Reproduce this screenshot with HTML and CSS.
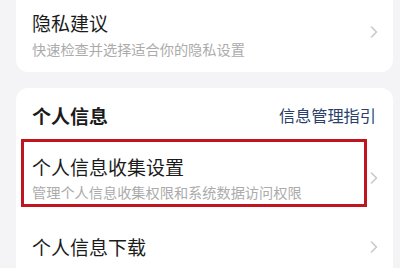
FILE: index.html
```html
<!DOCTYPE html>
<html lang="zh-CN">
<head>
<meta charset="utf-8">
<link rel="stylesheet" href="styles.css">
</head>
<body>
<div class="page">
  <div class="card card-top">
    <div class="row row-first">
      <div class="texts">
        <div class="title">隐私建议</div>
        <div class="sub">快速检查并选择适合你的隐私设置</div>
      </div>
      <svg class="chev" viewBox="0 0 8 12" width="8" height="12"><path d="M1.5 1 L6.5 6 L1.5 11" fill="none" stroke="#c9c9c9" stroke-width="1.6" stroke-linecap="round" stroke-linejoin="round"/></svg>
    </div>
  </div>
  <div class="card card-info">
    <div class="head">
      <div class="head-title">个人信息</div>
      <div class="head-link">信息管理指引</div>
    </div>
    <div class="row row-collect">
      <div class="texts">
        <div class="title">个人信息收集设置</div>
        <div class="sub">管理个人信息收集权限和系统数据访问权限</div>
      </div>
      <svg class="chev" viewBox="0 0 8 12" width="8" height="12"><path d="M1.5 1 L6.5 6 L1.5 11" fill="none" stroke="#c9c9c9" stroke-width="1.6" stroke-linecap="round" stroke-linejoin="round"/></svg>
    </div>
    <div class="row row-download">
      <div class="texts">
        <div class="title">个人信息下载</div>
      </div>
      <svg class="chev" viewBox="0 0 8 12" width="8" height="12"><path d="M1.5 1 L6.5 6 L1.5 11" fill="none" stroke="#c9c9c9" stroke-width="1.6" stroke-linecap="round" stroke-linejoin="round"/></svg>
    </div>
    <div class="highlight"></div>
  </div>
</div>
</body>
</html>
```
FILE: styles.css
```css
html, body {
  margin: 0;
  padding: 0;
  background: #f4f4f6;
  width: 400px;
  height: 268px;
  overflow: hidden;
  font-family: "Noto Sans CJK SC", "Noto Sans", sans-serif;
}
.page {
  padding: 0 7px 0 16px;
  display: flex;
  flex-direction: column;
  gap: 16px;
}
.card {
  background: #ffffff;
  position: relative;
}
.card-top {
  border-radius: 0 0 12px 12px;
  height: 72px;
  box-sizing: border-box;
}
.card-info {
  border-radius: 12px 12px 0 0;
  height: 180px;
}
.row {
  display: flex;
  align-items: center;
  padding: 0 15px 0 16px;
}
.texts {
  flex: 1;
}
.title {
  font-size: 19px;
  line-height: 26px;
  color: #1b1b1b;
}
.sub {
  font-size: 14.2px;
  line-height: 20px;
  color: #ababab;
}
.row-first {
  padding-top: 10px;
  padding-bottom: 13px;
}
.row-first .sub {
  margin-top: 3px;
}
.row-first .chev {
  margin-top: -6px;
}
.head {
  height: 54px;
  display: flex;
  align-items: center;
  justify-content: space-between;
  padding: 0 17px 0 16px;
}
.head-title {
  font-size: 19px;
  font-weight: 700;
  color: #1b1b1b;
}
.head-link {
  font-size: 16.2px;
  color: #2a3f6c;
}
.row-collect {
  padding-top: 12px;
  padding-bottom: 12px;
}
.row-collect .sub {
  margin-top: 2px;
}
.row-download {
  padding-top: 20px;
  padding-bottom: 10px;
}
.chev {
  display: block;
  flex: none;
}
.highlight {
  position: absolute;
  left: 5px;
  top: 51px;
  width: 346px;
  height: 68px;
  box-sizing: border-box;
  border: 3px solid #c0141e;
}
```
